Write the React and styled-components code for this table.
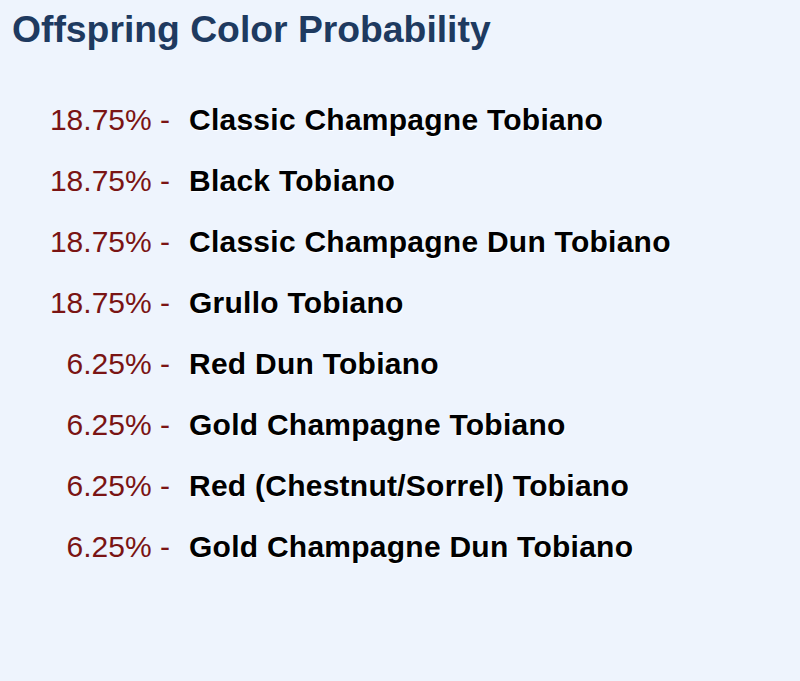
import React from "react";
import styled, { createGlobalStyle } from "styled-components";

const Global = createGlobalStyle`
  html, body { margin: 0; padding: 0; background: #eef4fd; }
  body { font-family: "Liberation Sans", Arial, sans-serif; }
`;

const Page = styled.div`
  min-height: 681px;
  box-sizing: border-box;
  padding: 8px 12px;
  background: #eef4fd;
`;

const Title = styled.h1`
  margin: 0 0 38px;
  font-size: 37.3px;
  font-weight: 700;
  color: #1e3a60;
`;

const List = styled.div`
  display: grid;
  grid-template-columns: 158px auto;
  column-gap: 19px;
  justify-content: start;
  line-height: 61px;
  font-size: 30px;
`;

const Percent = styled.span`
  text-align: right;
  color: #7a1414;
`;

const Name = styled.span`
  font-weight: 700;
  color: #000;
  letter-spacing: 0.25px;
  text-shadow: 1px 1px 1px #fff;
`;

const rows = [
  ["18.75%", "Classic Champagne Tobiano"],
  ["18.75%", "Black Tobiano"],
  ["18.75%", "Classic Champagne Dun Tobiano"],
  ["18.75%", "Grullo Tobiano"],
  ["6.25%", "Red Dun Tobiano"],
  ["6.25%", "Gold Champagne Tobiano"],
  ["6.25%", "Red (Chestnut/Sorrel) Tobiano"],
  ["6.25%", "Gold Champagne Dun Tobiano"],
];

export default function App() {
  return (
    <>
      <Global />
      <Page>
        <Title>Offspring Color Probability</Title>
        <List>
          {rows.map(([p, n], i) => (
            <React.Fragment key={i}>
              <Percent>{p} -</Percent>
              <Name>{n}</Name>
            </React.Fragment>
          ))}
        </List>
      </Page>
    </>
  );
}
